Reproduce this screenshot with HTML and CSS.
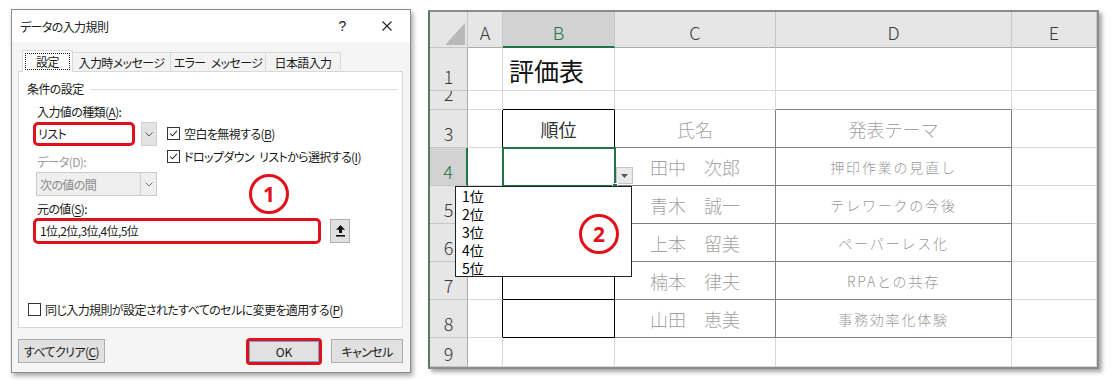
FILE: index.html
```html
<!DOCTYPE html>
<html lang="ja">
<head>
<meta charset="utf-8">
<title>データの入力規則</title>
<link rel="stylesheet" href="styles.css">
</head>
<body>
<div class="stage">
  <section class="dialog">
    <header class="titlebar">
      <span class="title">データの入力規則</span>
      <span class="help">?</span>
      <svg class="close" viewBox="0 0 10 10"><path d="M0.5 0.5L9.5 9.5M9.5 0.5L0.5 9.5" stroke="#222" stroke-width="1.1" fill="none"/></svg>
    </header>
    <nav class="tabs">
      <div class="tab tab-1 active"><span class="focus">設定</span></div>
      <div class="tab tab-2"><span>入力時メッセージ</span></div>
      <div class="tab tab-3"><span class="txt">エラー メッセージ</span></div>
      <div class="tab tab-4"><span>日本語入力</span></div>
    </nav>
    <div class="panel">
      <div class="group-title"><span>条件の設定</span><i class="rule"></i></div>
      <div class="upper">
        <div class="left-col">
          <div class="lbl">入力値の種類(<u>A</u>):</div>
          <div class="combo-row">
            <div class="combo-red">リスト</div>
            <div class="combo-btn"><svg viewBox="0 0 8 5" class="chev"><polyline points="0.5,0.5 4,4 7.5,0.5" fill="none" stroke="#555" stroke-width="1"/></svg></div>
          </div>
          <div class="lbl dis">データ(D):</div>
          <div class="combo-dis">
            <span class="dis-text">次の値の間</span>
            <span class="dis-btn"><svg viewBox="0 0 8 5" class="chev"><polyline points="0.5,0.5 4,4 7.5,0.5" fill="none" stroke="#777" stroke-width="1"/></svg></span>
          </div>
        </div>
        <div class="right-col">
          <div class="chk"><span class="box"><svg viewBox="0 0 13 13"><polyline points="2.5,6.5 5.2,9.2 10.5,3.5" fill="none" stroke="#222" stroke-width="1.2"/></svg></span><span class="txt">空白を無視する(<u>B</u>)</span></div>
          <div class="chk chk-2"><span class="box"><svg viewBox="0 0 13 13"><polyline points="2.5,6.5 5.2,9.2 10.5,3.5" fill="none" stroke="#222" stroke-width="1.2"/></svg></span><span class="txt">ドロップダウン リストから選択する(<u>I</u>)</span></div>
        </div>
      </div>
      <div class="lbl src-lbl">元の値(<u>S</u>):</div>
      <div class="src-row">
        <div class="src-input">1位,2位,3位,4位,5位</div>
        <div class="ref-btn"><svg viewBox="0 0 9 12" class="ref-icon"><polygon points="4.5,0 9,4.8 6,4.8 6,8 3,8 3,4.8 0,4.8" fill="#111"/><rect x="0" y="10" width="9" height="1.6" fill="#111"/></svg></div>
      </div>
      <div class="chk apply"><span class="box"></span><span class="txt">同じ入力規則が設定されたすべてのセルに変更を適用する(<u>P</u>)</span></div>
      <div class="badge badge-1">1</div>
    </div>
    <div class="buttons">
      <div class="btn btn-clear"><span>すべてクリア(<u>C</u>)</span></div>
      <div class="btn btn-ok">OK</div>
      <div class="btn btn-cancel">キャンセル</div>
    </div>
  </section>

  <section class="sheet">
    <div class="grid">
      <div class="hd corner"><svg viewBox="0 0 37 35" class="corner-tri"><polygon points="15,33 35,33 35,11" fill="#b8b8b8"/></svg></div>
      <div class="hd col">A</div>
      <div class="hd col col-sel">B</div>
      <div class="hd col">C</div>
      <div class="hd col">D</div>
      <div class="hd col">E</div>

      <div class="hd row">1</div>
      <div class="c"></div>
      <div class="c b1">評価表</div>
      <div class="c"></div>
      <div class="c"></div>
      <div class="c"></div>

      <div class="hd row row-2"><span>2</span></div>
      <div class="c"></div>
      <div class="c bot-black"></div>
      <div class="c"></div>
      <div class="c bot-dark"></div>
      <div class="c"></div>

      <div class="hd row">3</div>
      <div class="c right-black"></div>
      <div class="c bcell head">順位</div>
      <div class="c ccell light">氏名</div>
      <div class="c dcell light">発表テーマ</div>
      <div class="c"></div>

      <div class="hd row row-sel">4</div>
      <div class="c right-black"></div>
      <div class="c bcell sel"><span class="dd-btn"><svg viewBox="0 0 7 4"><polygon points="0,0 7,0 3.5,4" fill="#555"/></svg></span><span class="fill-handle"></span></div>
      <div class="c ccell name">田中　次郎</div>
      <div class="c dcell theme">押印作業の見直し</div>
      <div class="c"></div>

      <div class="hd row">5</div>
      <div class="c right-black"></div>
      <div class="c bcell"></div>
      <div class="c ccell name">青木　誠一</div>
      <div class="c dcell theme">テレワークの今後</div>
      <div class="c"></div>

      <div class="hd row">6</div>
      <div class="c right-black"></div>
      <div class="c bcell"></div>
      <div class="c ccell name">上本　留美</div>
      <div class="c dcell theme">ペーパーレス化</div>
      <div class="c"></div>

      <div class="hd row">7</div>
      <div class="c right-black"></div>
      <div class="c bcell"></div>
      <div class="c ccell name">楠本　律夫</div>
      <div class="c dcell theme">RPAとの共存</div>
      <div class="c"></div>

      <div class="hd row">8</div>
      <div class="c right-black"></div>
      <div class="c bcell"></div>
      <div class="c ccell name">山田　恵美</div>
      <div class="c dcell theme">事務効率化体験</div>
      <div class="c"></div>

      <div class="hd row row-9">9</div>
      <div class="c"></div>
      <div class="c"></div>
      <div class="c"></div>
      <div class="c"></div>
      <div class="c"></div>
    </div>
    <ul class="dropdown">
      <li>1位</li>
      <li>2位</li>
      <li>3位</li>
      <li>4位</li>
      <li>5位</li>
    </ul>
    <div class="badge badge-2">2</div>
  </section>
</div>
</body>
</html>
```

FILE: styles.css
```css
* { box-sizing: border-box; }
html, body { margin: 0; padding: 0; background: #fff; }
body {
  width: 1112px;
  height: 381px;
  overflow: hidden;
  font-family: "Noto Sans CJK JP", "Noto Sans", sans-serif;
  color: #000;
}
u { text-decoration: underline; text-underline-offset: 2px; }

.stage {
  display: flex;
  align-items: flex-start;
  gap: 17px;
  padding: 9px 0 0 11px;
}

/* ---------- Dialog ---------- */
.dialog {
  width: 400px;
  height: 364px;
  border: 1px solid #8c8c8c;
  background: #f5f5f5;
  box-shadow: 2px 3px 5px rgba(0, 0, 0, 0.35);
  display: flex;
  flex-direction: column;
  font-size: 12px;
  line-height: 17px;
  letter-spacing: -0.6px;
  color: #1a1a1a;
  font-feature-settings: "palt";
}
.txt { word-spacing: 3px; white-space: nowrap; }
.titlebar {
  height: 32px;
  background: #fff;
  display: flex;
  align-items: center;
  padding-left: 8px;
}
.title { flex: 1; color: #222; }
.help {
  width: 10px;
  text-align: center;
  font-family: "Liberation Sans", sans-serif;
  font-size: 14px;
  margin-right: 35px;
}
.close { width: 10px; height: 10px; margin-right: 18px; }

.tabs {
  display: flex;
  align-items: flex-end;
  height: 21px;
  margin-top: 8px;
  padding-left: 10px;
  position: relative;
  z-index: 1;
}
.tab {
  height: 19px;
  border: 1px solid #d9d9d9;
  border-bottom: none;
  background: #f3f3f3;
  display: flex;
  align-items: center;
  justify-content: center;
  margin-left: -1px;
  white-space: nowrap;
}
.tab-1 { width: 51px; margin-left: 0; }
.tab-2 { width: 99px; }
.tab-3 { width: 96px; }
.tab-4 { width: 76px; }
.tab.active {
  height: 22px;
  margin-bottom: -1px;
  background: #fff;
}
.focus {
  border: 1px dotted #222;
  padding: 0 10px;
  line-height: 15px;
  margin-top: -1px;
}

.panel {
  position: relative;
  margin: 0 7px 0 6px;
  height: 257px;
  border: 1px solid #d9d9d9;
  background: #fff;
  display: flex;
  flex-direction: column;
  padding: 8px 0 0 8px;
}
.group-title {
  display: flex;
  align-items: center;
  height: 17px;
}
.rule {
  flex: 1;
  height: 1px;
  background: #dcdcdc;
  margin: 1px 4px 0 6px;
}
.upper { display: flex; margin-top: 6px; }
.left-col { margin-left: 6px; width: 124px; }
.lbl { padding-left: 4px; height: 17px; white-space: nowrap; }
.lbl.dis { color: #9a9a9a; margin-top: 7px; padding-left: 4px; }
.combo-row { display: flex; margin-top: 2px; height: 24px; }
.combo-red {
  width: 102px;
  height: 24px;
  border: 3px solid #e3101b;
  border-radius: 5px;
  padding-left: 2px;
  line-height: 18px;
}
.combo-btn {
  width: 16px;
  height: 24px;
  margin-left: 6px;
  background: #e3e3e3;
  border: 1px solid #cfcfcf;
  display: flex;
  align-items: center;
  justify-content: center;
}
.chev { width: 8px; height: 5px; }
.combo-dis {
  margin-top: 2px;
  margin-left: 3px;
  width: 121px;
  height: 24px;
  border: 1px solid #cccccc;
  background: #efefef;
  display: flex;
  align-items: center;
}
.dis-text { flex: 1; color: #8a8a8a; padding-left: 3px; }
.dis-btn {
  width: 16px;
  height: 22px;
  border-left: 1px solid #cfcfcf;
  display: flex;
  align-items: center;
  justify-content: center;
}

.right-col { margin-left: 10px; padding-top: 22px; }
.chk { display: flex; align-items: center; height: 17px; white-space: nowrap; }
.chk-2 { margin-top: 6px; }
.box {
  width: 13px;
  height: 13px;
  border: 1px solid #333;
  background: #fff;
  margin-right: 4px;
  display: flex;
  flex: none;
}
.box svg { width: 11px; height: 11px; }

.src-lbl { margin-top: 4px; padding-left: 10px; }
.src-row { display: flex; margin-top: 1px; margin-left: 6px; }
.src-input {
  width: 288px;
  height: 26px;
  border: 3px solid #e3101b;
  border-radius: 5px;
  padding-left: 4px;
  line-height: 19px;
}
.ref-btn {
  width: 20px;
  height: 24px;
  margin: 1px 0 0 9px;
  background: #e1e1e1;
  border: 1px solid #adadad;
  display: flex;
  align-items: center;
  justify-content: center;
}
.ref-icon { width: 9px; height: 12px; }
.apply { margin-top: auto; margin-bottom: 9px; margin-left: 1px; }

.badge {
  position: absolute;
  width: 40px;
  height: 40px;
  border: 3px solid #e3101b;
  border-radius: 50%;
  color: #e3101b;
  font-family: "Noto Sans", "Liberation Sans", sans-serif;
  font-weight: 700;
  font-size: 21px;
  line-height: 34px;
  letter-spacing: 0;
  text-align: center;
  background: transparent;
}
.badge-1 { left: 230px; top: 102px; }

.buttons {
  display: flex;
  align-items: center;
  height: 28px;
  margin-top: 9px;
  padding: 0 7px 0 6px;
}
.btn {
  height: 24px;
  background: #e1e1e1;
  border: 1px solid #adadad;
  display: flex;
  align-items: center;
  justify-content: center;
  white-space: nowrap;
}
.btn-clear { width: 87px; }
.btn-ok {
  width: 76px;
  height: 27px;
  margin-left: auto;
  border: 3px solid #e3101b;
  border-radius: 4px;
  box-shadow: inset 0 0 0 1px #6fa7d6;
  letter-spacing: 0;
}
.btn-cancel { width: 72px; margin-left: 9px; }

/* ---------- Spreadsheet ---------- */
.sheet {
  position: relative;
  margin-top: 1px;
  border: 2px solid #8c8c8c;
  border-left-color: #587a60;
  box-shadow: 3px 3px 4px rgba(0, 0, 0, 0.35);
  background: #fff;
}
.grid {
  display: grid;
  grid-template-columns: 38px 35px 112px 161px 236px 85px;
  grid-template-rows: 36px 43px 19px 38px 38px 38px 38px 38px 38px 29px;
}
.grid > div {
  border-right: 1px solid #d9d9d9;
  border-bottom: 1px solid #d9d9d9;
}
.hd {
  background: #e6e6e6;
  color: #3a3a3a;
  font-family: "Noto Sans CJK JP", sans-serif;
  font-size: 18px;
  font-weight: 300;
  line-height: 18px;
  display: flex;
  align-items: center;
  justify-content: center;
}
.grid > .hd { border-right-color: #c6c6c6; border-bottom-color: #c6c6c6; }
.grid > .col { border-bottom-color: #ababab; padding-top: 4px; }
.grid > .row {
  border-right-color: #ababab;
  align-items: flex-end;
  padding-bottom: 5px;
}
.grid > .row-9 { padding-bottom: 4px; }
.corner { position: relative; }
.corner-tri { position: absolute; left: 0; top: 0; width: 37px; height: 35px; }
.grid > .col-sel {
  background: #d2d2d2;
  color: #217346;
  border-bottom: 2px solid #217346;
  padding-top: 5px;
}
.grid > .row-sel {
  background: #d2d2d2;
  color: #217346;
  border-right: 2px solid #217346;
}
.grid > .row-2 {
  overflow: hidden;
  padding-bottom: 0;
}
.row-2 span { display: block; line-height: 2px; height: 2px; margin-bottom: 15px; }

.c {
  display: flex;
  align-items: center;
  justify-content: center;
  white-space: nowrap;
  font-size: 18px;
}
.b1 {
  justify-content: flex-start;
  padding-left: 6px;
  font-size: 25px;
  color: #111;
  padding-top: 2px;
}
.grid > .bot-black { border-bottom-color: #000; }
.grid > .bot-dark { border-bottom-color: #808080; }
.grid > .right-black { border-right-color: #000; }
.grid > .bcell { border-right-color: #000; border-bottom-color: #000; }
.grid > .ccell { border-right-color: #808080; border-bottom-color: #808080; }
.grid > .dcell { border-right-color: #808080; border-bottom-color: #808080; }
.head { color: #333; }
.light { color: #a3a3a3; font-weight: 300; }
.name { color: #a3a3a3; font-weight: 300; }
.theme { color: #999; font-size: 14px; letter-spacing: 1.8px; font-weight: 300; }

.sel { position: relative; }
.sel::after {
  content: "";
  position: absolute;
  top: -1px;
  left: -1px;
  right: -2px;
  bottom: -2px;
  border: 2px solid #217346;
}
.dd-btn {
  position: absolute;
  left: 113px;
  top: 19px;
  width: 17px;
  height: 17px;
  background: #e9e9ee;
  border: 1px solid #c4c4c4;
  display: flex;
  align-items: center;
  justify-content: center;
  z-index: 1;
}
.dd-btn svg { width: 7px; height: 4px; }
.fill-handle {
  position: absolute;
  right: -4px;
  bottom: -4px;
  width: 6px;
  height: 6px;
  background: #217346;
  border: 1px solid #fff;
  z-index: 1;
}

.dropdown {
  position: absolute;
  left: 25px;
  top: 174px;
  width: 177px;
  height: 91px;
  margin: 0;
  padding: 0 0 0 6px;
  list-style: none;
  background: #fff;
  border: 1px solid #222;
  font-size: 14px;
  line-height: 18px;
  z-index: 2;
}
.badge-2 { left: 149px; top: 202px; z-index: 3; }
```
